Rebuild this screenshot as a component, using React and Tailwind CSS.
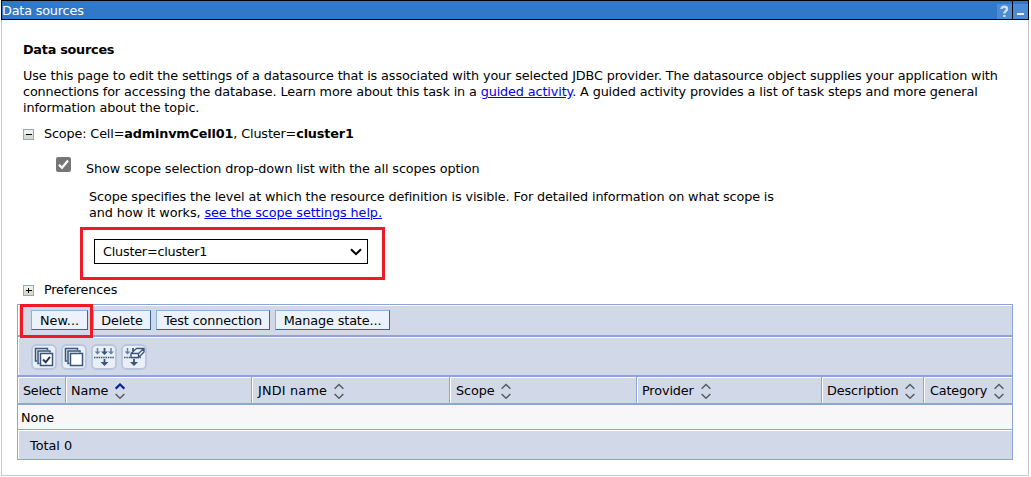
import React from "react";

function Toggle({ open }) {
  return (
    <svg width="11" height="11" viewBox="0 0 11 11" shapeRendering="crispEdges" className="shrink-0">
      <rect x="0.5" y="0.5" width="10" height="10" fill="#d9d9d2" stroke="#8fa9c8" />
      <rect x="1" y="1" width="9" height="4" fill="#efefee" />
      <rect x="3" y="5" width="6" height="1" fill="#000" />
      {!open && <rect x="5" y="3" width="1" height="5" fill="#000" />}
    </svg>
  );
}

function Sort({ active }) {
  return (
    <svg width="10" height="16" viewBox="0 0 10 16" fill="none" className="block shrink-0">
      <path d="M0.6 5.700 L5 1.500 L9.400 5.700" stroke={active ? "#0a1f9c" : "#555b60"} strokeWidth={active ? 2.2 : 1.5} />
      <path d="M0.6 11 L5 15.200 L9.400 11" stroke="#555b60" strokeWidth="1.5" />
    </svg>
  );
}

function Tool({ children }) {
  return (
    <svg width="26" height="26" viewBox="0 0 26 26" fill="none" stroke="#3d5478" strokeWidth="1.5">
      <rect x="1" y="1" width="24" height="24" rx="4.5" fill="#e9eff7" stroke="#b7c5dd" strokeWidth="1.8" />
      {children}
    </svg>
  );
}

function Stack() {
  return (
    <>
      <path d="M6 17H4.500V4.500H16.500V6" />
      <path d="M8.500 19.500H7V7H19V8.500" />
      <rect x="9.500" y="9.500" width="12" height="12" fill="#fff" />
    </>
  );
}

function Button({ className, children }) {
  return (
    <button
      className={
        "h-5 shrink-0 border border-t-[#8db3d3] border-l-[#8db3d3] border-r-[#336699] border-b-[#336699] bg-[#ebf2fc] pt-px text-center leading-[18px] " +
        className
      }
    >
      {children}
    </button>
  );
}

function Head({ className, label, gap, active }) {
  return (
    <div className={"flex h-[26px] shrink-0 items-center border-t border-l border-white " + className}>
      <span>{label}</span>
      {gap && (
        <span className={gap}>
          <Sort active={active} />
        </span>
      )}
    </div>
  );
}

export default function App() {
  return (
    <div className="h-[477px] w-[1031px] overflow-hidden bg-white pl-px font-['DejaVu_Sans',sans-serif] text-[12.8px] leading-4 tracking-[-0.12px] text-black">
      <div className="flex h-5 w-[1028px] items-center border border-black bg-[#3178c8] text-white">
        <span className="grow pt-px tracking-[-0.18px]">Data sources</span>
        <svg width="15" height="15" viewBox="0 0 15 15" className="mt-0.5">
          <rect width="15" height="15" fill="#4c8cd2" />
          <path d="M4.500 5C4.500 2 10 2 10 5C10 7 7.300 7 7.300 9.500M7.300 11V13" fill="none" stroke="#cfe0f3" strokeWidth="2.400" />
        </svg>
        <div className="h-[18px] w-px bg-black" />
        <svg width="15" height="15" viewBox="0 0 15 15" className="mt-0.5">
          <rect width="15" height="15" fill="#4c8cd2" />
          <rect x="4" y="9" width="7" height="2" fill="#e5f0fb" />
        </svg>
      </div>

      <div className="h-[456px] w-[1028px] border-x border-b border-[#c8c8c8]">
        <div className="h-[284px] pt-[22px] pl-[21px]">
          <h1 className="font-bold tracking-[-0.25px]">Data sources</h1>
          <p className="mt-[10px] whitespace-nowrap">
            <span className="block">
              Use this page to edit the settings of a datasource that is associated with your selected JDBC provider. The datasource object supplies your application with
            </span>
            <span className="block tracking-[-0.123px]">
              connections for accessing the database. Learn more about this task in a{" "}
              <a className="text-[#0000ee] underline">guided activity</a>. A guided activity provides a list of task steps and more general
            </span>
            <span className="block">information about the topic.</span>
          </p>
          <div className="mt-[10px] flex items-center gap-[10px]">
            <Toggle open />
            <span className="tracking-[-0.145px]">
              Scope: Cell=<b>adminvmCell01</b>, Cluster=<b>cluster1</b>
            </span>
          </div>
          <div className="mt-[15px] ml-[33px] flex h-5 items-start gap-[15px]">
            <svg width="15" height="15" viewBox="0 0 15 15" className="shrink-0">
              <rect width="15" height="15" rx="2" fill="#767676" />
              <path d="M3 7.800 L6 10.800 L12 3.500" fill="none" stroke="#fff" strokeWidth="2.200" />
            </svg>
            <span className="mt-1">Show scope selection drop-down list with the all scopes option</span>
          </div>
          <p className="mt-3 ml-[66px] whitespace-nowrap">
            <span className="block">Scope specifies the level at which the resource definition is visible. For detailed information on what scope is</span>
            <span className="block tracking-[-0.09px]">
              and how it works, <a className="text-[#0000ee] underline">see the scope settings help.</a>
            </span>
          </p>
          <div className="mt-[6px] ml-[57px] h-[53px] w-[305px] border-[3px] border-[#ed1c24] pt-[9px] pl-[11px]">
            <div className="flex h-[25px] w-[274px] items-center justify-between border border-black pr-[5px] pl-2">
              <span className="tracking-[-0.22px]">Cluster=cluster1</span>
              <svg width="12" height="8" viewBox="0 0 12 8" fill="none" stroke="#000" strokeWidth="2">
                <path d="M1 1.200 L6 6.200 L11 1.200" />
              </svg>
            </div>
          </div>
          <div className="mt-[2px] flex items-center gap-[10px]">
            <Toggle />
            <span className="tracking-[-0.18px]">Preferences</span>
          </div>
        </div>

        <div className="ml-[15px] h-[156px] w-[996px] border border-[#8ba5d8] bg-[#d1d9e8]">
          <div className="relative flex h-[30px] gap-[5px] border-t border-l border-white pt-[4px] pl-[12px]">
            <Button className="w-[57px] tracking-[0.05px]">New...</Button>
            <Button className="w-[58px]">Delete</Button>
            <Button className="w-[114px]">Test connection</Button>
            <Button className="w-[115px]">Manage state...</Button>
            <div className="pointer-events-none absolute -top-[2px] left-[1px] z-10 h-[34px] w-[73px] border-[3px] border-[#ed1c24]" />
          </div>
          <div className="h-[2px] bg-[#8ba5d8]" />
          <div className="flex h-[38px] gap-[4px] border-t border-l border-white pt-[6px] pl-[12px]">
            <Tool>
              <Stack />
              <path d="M12 15.500 L14.700 18.300 L19 12.800" strokeWidth="2" stroke="#22365a" />
            </Tool>
            <Tool>
              <Stack />
            </Tool>
            <Tool>
              <path d="M3 13.500H23" strokeDasharray="1.500 0.800" />
              <path d="M6.500 4V9M20 4V9" stroke="#6580a8" />
              <path d="M13.500 4V9M13.500 15V20" strokeWidth="1.800" />
              <path d="M3.500 7.500L6.500 10.500L9.500 7.500ZM17 7.500L20 10.500L23 7.500Z" fill="#6580a8" stroke="none" />
              <path d="M10 7.500L13.500 11L17 7.500ZM9.500 18L13.500 22L17.500 18Z" fill="#3d5478" stroke="none" />
            </Tool>
            <Tool>
              <path d="M3 13.500H20" strokeDasharray="1.500 0.800" />
              <path d="M6.500 4V9" stroke="#6580a8" />
              <path d="M12 4V7M13 15V20" strokeWidth="1.800" />
              <path d="M3.500 7.500L6.500 10.500L9.500 7.500Z" fill="#6580a8" stroke="none" />
              <path d="M9 18L13 22L17 18Z" fill="#3d5478" stroke="none" />
              <path d="M10 9.500L15.500 4.500H23V8L17.500 13.500H10ZM10 9.500H17.500L23 4.500M17.500 9.500V13.500" fill="#fff" strokeWidth="1.400" strokeLinejoin="round" />
            </Tool>
          </div>
          <div className="h-[2px] bg-[#8ba5d8]" />
          <div className="flex gap-px bg-[#8ba5d8] [&>div]:bg-[#d1d9e8]">
            <Head className="w-[47px] pl-1 tracking-[-0.3px]" label="Select" />
            <Head className="w-[185px] pl-1" label="Name" gap="ml-[7px]" active />
            <Head className="w-[197px] pl-[5px] tracking-[0.2px]" label="JNDI name" gap="ml-[7px]" />
            <Head className="w-[186px] pl-[5px]" label="Scope" gap="ml-[7px]" />
            <Head className="w-[184px] pl-[4px]" label="Provider" gap="ml-[7px]" />
            <Head className="w-[101px] pl-[4px]" label="Description" gap="ml-[6px]" />
            <Head className="w-[88px] pl-[5px] tracking-[-0.16px]" label="Category" gap="ml-[7px]" />
          </div>
          <div className="h-[2px] bg-[#8ba5d8]" />
          <div className="h-[24px] bg-[#f7f7f7] pt-[5px] pl-[3px]">None</div>
          <div className="h-px bg-[#8ba5d8]" />
          <div className="h-[29px] border-t border-l border-white pt-[7px] pl-[11px] tracking-normal">Total 0</div>
        </div>
      </div>
    </div>
  );
}
